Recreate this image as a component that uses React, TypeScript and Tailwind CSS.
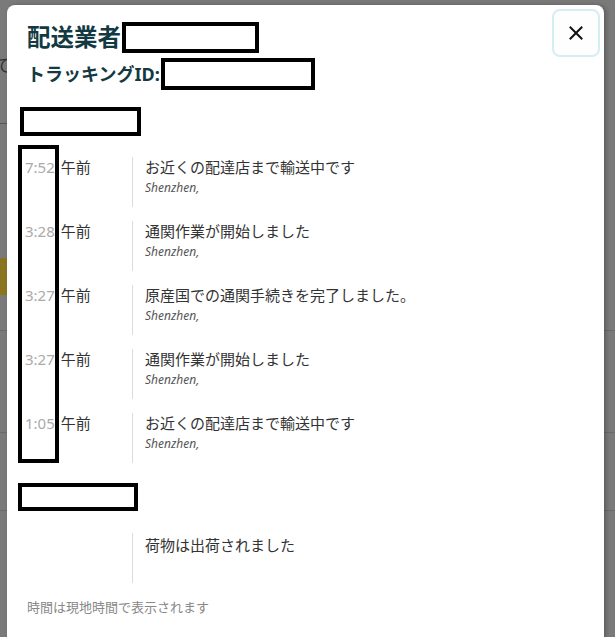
import React from "react";

const rows = [
  { t: "7:52", d: "お近くの配達店まで輸送中です" },
  { t: "3:28", d: "通関作業が開始しました" },
  { t: "3:27", d: "原産国での通関手続きを完了しました。" },
  { t: "3:27", d: "通関作業が開始しました" },
  { t: "1:05", d: "お近くの配達店まで輸送中です" },
];

const font = { fontFamily: '"Noto Sans", "Noto Sans CJK JP", sans-serif' };

export default function App() {
  return (
    <div className="relative h-[637px] w-[615px] overflow-hidden bg-[#7a7a7a]" style={font}>
      {/* background page (dimmed) */}
      <div className="flex flex-col">
        <div className="mt-[55px] ml-[-6px] text-[18px] leading-[20px] text-[#333]">て</div>
        <div className="mt-[48px] h-[1px] w-[40px] bg-[#555]" />
        <div className="mt-[134px] h-[37px] w-[40px] bg-[#8a7420]" />
        <div className="mt-[35px] h-[1px] w-[615px] bg-[#6a6a6a]" />
        <div className="mt-[101px] h-[1px] w-[615px] bg-[#6a6a6a]" />
        <div className="mt-[77px] h-[1px] w-[615px] bg-[#6a6a6a]" />
      </div>

      {/* modal */}
      <div className="absolute left-[7px] top-[5px] h-[640px] w-[597px] rounded-t-[8px] bg-white shadow-[2px_0_4px_rgba(0,0,0,0.25)]">
        <button className="absolute right-[4px] top-[4px] flex h-[48px] w-[48px] items-center justify-center rounded-[8px] border-2 border-[#d4eef2] bg-[#fefefe]">
          <svg width="14" height="14" viewBox="0 0 14 14">
            <path d="M1.5 1.5 L12.5 12.5 M12.5 1.5 L1.5 12.5" stroke="#111" strokeWidth="2" strokeLinecap="square" />
          </svg>
        </button>

        <div className="flex flex-col pl-[20px] pt-[16px]">
          <div className="flex items-center">
            <span className="text-[23.5px] font-bold leading-[32px] text-[#133a43]">配送業者</span>
            <span className="ml-[1px] h-[31px] w-[137px] border-4 border-black" />
          </div>
          <div className="mt-[5px] flex items-center">
            <span className="text-[18px] font-bold leading-[24px] text-[#133a43]">トラッキングID:</span>
            <span className="ml-[1px] h-[32px] w-[154px] border-4 border-black" />
          </div>

          <div className="ml-[-7px] mt-[17px] h-[29px] w-[121px] border-4 border-black" />

          <div className="relative mt-[21px] flex flex-col gap-[14px]">
            {rows.map((r, i) => (
              <div key={i} className="flex h-[50px]">
                <div className="flex w-[105px] text-[15px] leading-[20px]">
                  <span className="ml-[-2px] text-[#aaa]">{r.t}</span>
                  <span className="ml-[6px] text-[#333]">午前</span>
                </div>
                <div className="flex flex-col border-l border-[#dcdcdc] pl-[12px]">
                  <span className="text-[15px] leading-[20px] text-[#333]">{r.d}</span>
                  <span className="mt-[2px] text-[12px] italic leading-[18px] text-[#555]">Shenzhen,</span>
                </div>
              </div>
            ))}
            <div className="absolute left-[-9px] top-[-12px] h-[318px] w-[41px] border-4 border-black" />
          </div>

          <div className="ml-[-9px] mt-[20px] h-[28px] w-[120px] border-4 border-black" />

          <div className="mt-[22px] flex h-[50px]">
            <div className="w-[105px]" />
            <div className="border-l border-[#dcdcdc] pl-[12px]">
              <span className="text-[15px] leading-[20px] text-[#333]">荷物は出荷されました</span>
            </div>
          </div>

          <div className="mt-[15px] text-[13px] leading-[18px] text-[#888]">時間は現地時間で表示されます</div>
        </div>
      </div>
    </div>
  );
}
